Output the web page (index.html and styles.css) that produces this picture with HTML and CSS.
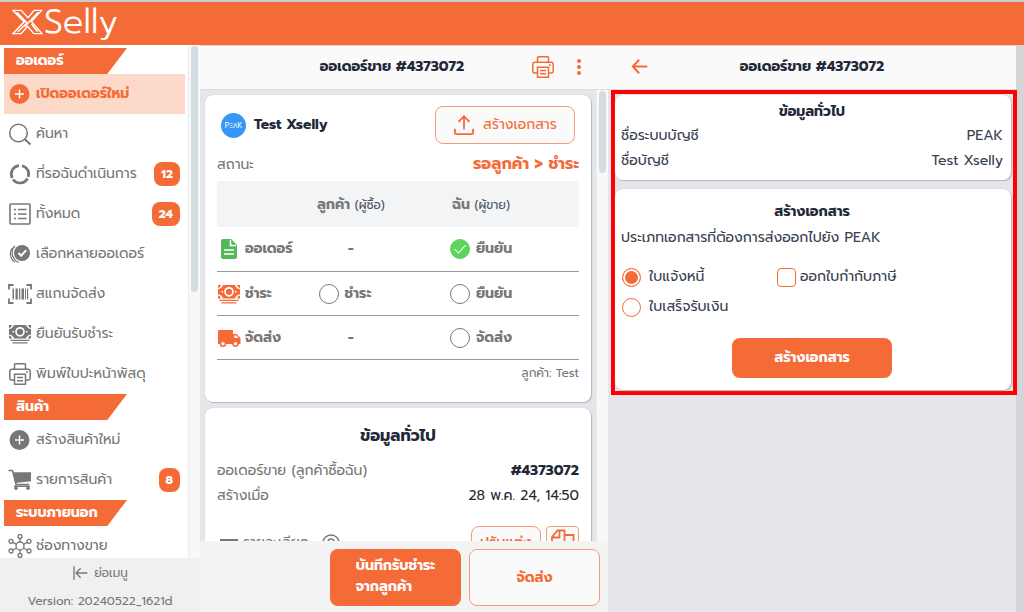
FILE: index.html
```html
<!DOCTYPE html>
<html lang="th">
<head>
<meta charset="utf-8">
<meta name="viewport" content="width=device-width, initial-scale=1">
<title>XSelly</title>
<link rel="stylesheet" href="styles.css">
</head>
<body>
<svg class="sprite" aria-hidden="true">
  <symbol id="plus" viewBox="0 0 24 24"><circle cx="11.500" cy="12" r="10" fill="currentColor"/><path d="M7 12h9M11.500 7.500v9" stroke="#fff" stroke-width="1.400"/></symbol>
  <symbol id="search" viewBox="0 0 24 24"><g fill="none" stroke="currentColor" stroke-width="1.500"><circle cx="10.500" cy="11" r="8.800"/><path d="M16.800 17.300L22.500 22.500" stroke-width="2"/></g></symbol>
  <symbol id="ring" viewBox="0 0 24 24"><g fill="none" stroke="currentColor" stroke-width="2.700"><path d="M14 3.700A8.600 8.600 0 0 1 20.200 15"/><path d="M19.500 16.500A8.600 8.600 0 0 1 5 17.500"/><path d="M4.200 16A8.600 8.600 0 0 1 11 3.600"/></g></symbol>
  <symbol id="list" viewBox="0 0 24 24"><g fill="none" stroke="currentColor" stroke-width="1.600"><rect x="2" y="2" width="20" height="20" rx="1"/><path d="M6 7.500h2M10 7.500h8.500M6 12h2M10 12h8.500M6 16.500h2M10 16.500h8.500"/></g></symbol>
  <symbol id="multi" viewBox="0 0 24 24"><circle cx="14" cy="11" r="8" fill="currentColor"/><path d="M10.500 11l2.700 2.700 5-5.500" fill="none" stroke="#fff" stroke-width="2"/><path d="M7 4C2.500 7.500 3 16.500 10.500 20.500M4.500 6C1 9.500 2 17.500 7 20" fill="none" stroke="currentColor" stroke-width="1.200"/></symbol>
  <symbol id="barcode" viewBox="0 0 24 24"><path d="M5.500 3H1v4.500M18.500 3H23v4.500M5.500 21H1v-4.500M18.500 21H23v-4.500" fill="none" stroke="currentColor" stroke-width="1.800"/><path d="M4.500 6.500H6v11H4.500zM7.500 6.500h2.300v11H7.500zM11 6.500h1.300v11H11zM13.500 6.500h2.500v11h-2.500zM17 6.500h1v11h-1zM19 6.500h1.200v11H19z" fill="currentColor"/></symbol>
  <symbol id="money" viewBox="0 0 24 24"><path d="M1 3h3a3.500 3.500 0 0 1-3 3zM6 3h12c.5 2 2.500 4 5 4v5.500c-2.500 0-4.500 2-5 4H6c-.5-2-2.500-4-5-4V7c2.500 0 4.500-2 5-4zM20 3h3v3a3.500 3.500 0 0 1-3-3zM1 13.500a3.500 3.500 0 0 1 3 3H1zM23 13.500a3.500 3.500 0 0 0-3 3h3zM2.500 17.800h19v1.300h-19zM4.500 20.200h15v1.300h-15z" fill="currentColor"/><circle cx="12" cy="9.800" r="4" fill="none" stroke="#fff" stroke-width="1.700"/><path d="M4.500 9.800h1.500M18 9.800h1.500" stroke="#fff" stroke-width="1.500"/></symbol>
  <symbol id="printer" viewBox="0 0 24 24"><g fill="none" stroke="currentColor" stroke-width="1.500"><path d="M6.500 7V2.500q0-.8.800-.8h9.400q.8 0 .8.800V7M6.500 18H3.500Q1.800 18 1.800 16.300V9.500Q1.800 7.300 4 7.300h16q2.200 0 2.200 2.200v6.800q0 1.700-1.700 1.700h-3"/><path d="M6.500 12.300h11v10h-11zM9 15.500h6M9 18.700h6"/></g><circle cx="19" cy="10" r=".9" fill="currentColor"/></symbol>
  <symbol id="cart" viewBox="0 0 24 24"><path d="M.5 2.500h4l3.500 14h13" fill="none" stroke="currentColor" stroke-width="1.500"/><path d="M5 4.300h18v9L7.300 15zM6 17.500h16V19H6z" fill="currentColor"/><circle cx="8" cy="20.300" r="1.700" fill="currentColor"/><circle cx="20" cy="20.300" r="1.700" fill="currentColor"/></symbol>
  <symbol id="hub" viewBox="0 0 24 24"><g fill="none" stroke="currentColor" stroke-width="1.300"><circle cx="12" cy="12" r="4"/><circle cx="12" cy="2.500" r="2"/><circle cx="12" cy="21.500" r="2"/><circle cx="3" cy="7.300" r="2"/><circle cx="21" cy="7.300" r="2"/><circle cx="3" cy="17" r="2"/><circle cx="21" cy="17" r="2"/><path d="M12 4.500V8M12 16v3.500M4.800 8.300l3.800 2M19.200 8.300l-3.800 2M4.800 16l3.800-2M19.200 16l-3.800-2"/></g></symbol>
  <symbol id="collapse" viewBox="0 0 24 24"><path d="M3 2v20M23 12H6M13 5L6 12l7 7" fill="none" stroke="currentColor" stroke-width="2"/></symbol>
  <symbol id="back" viewBox="0 0 24 24"><path d="M23 12H3M11.500 2.500L2.500 12l9 9.500" fill="none" stroke="currentColor" stroke-width="2.800"/></symbol>
  <symbol id="upload" viewBox="0 0 24 24"><path d="M2 16v4.500q0 1.500 1.500 1.500h17q1.500 0 1.500-1.500V16M12 17V3M6 8.500L12 2.500l6 6" fill="none" stroke="currentColor" stroke-width="2"/></symbol>
  <symbol id="doc" viewBox="0 0 24 24"><path d="M6 2h8L20 8v12q0 2-2 2H6q-2 0-2-2V4q0-2 2-2z" fill="currentColor"/><path d="M13.500 3v5.500H19M7 13h10M7 17h10" fill="none" stroke="#fff" stroke-width="1.500"/></symbol>
  <symbol id="truck" viewBox="0 0 24 24"><path d="M2 4h13q1 0 1 1v3h3.500L23.500 12v6H1V5q0-1 1-1z" fill="currentColor"/><path d="M17.300 9.500h2L21.500 12h-4.200z" fill="#fff"/><circle cx="6" cy="17.700" r="2.500" fill="#fff" stroke="currentColor" stroke-width="1.500"/><circle cx="18.500" cy="17.700" r="2.500" fill="#fff" stroke="currentColor" stroke-width="1.500"/></symbol>
  <symbol id="copy" viewBox="0 0 24 24"><path d="M6.500 3.500H13.500V15H1V10zM8.500 4v6.500H1.500M13.500 8h9v13H10v-6" fill="none" stroke="currentColor" stroke-width="1.800"/></symbol>
</svg>

<header class="topbar">
  <a class="brand" href="#" aria-label="XSelly">
    <svg class="brand-x" viewBox="0 0 32 26"><path d="M1 1h8.500l7 7.500L23 1h7.500L20 12.500 31 25h-8.500L16 17.500 9.500 25H1L12.500 13zM5 3l10.500 11L6 23M27 3L13 18M20 15l6.500 8" fill="none" stroke="currentColor" stroke-width="1.500"/></svg>
    <span>Selly</span>
  </a>
</header>

<div class="workspace">
  <aside class="sidebar">
    <div class="scroll-area">
      <nav class="menu">
        <h2 class="menu-title">ออเดอร์</h2>
        <a class="menu-item active" href="#"><svg class="icon"><use href="#plus"/></svg><span>เปิดออเดอร์ใหม่</span></a>
        <a class="menu-item" href="#"><svg class="icon"><use href="#search"/></svg><span>ค้นหา</span></a>
        <a class="menu-item" href="#"><svg class="icon"><use href="#ring"/></svg><span>ที่รอฉันดำเนินการ</span><b class="badge">12</b></a>
        <a class="menu-item" href="#"><svg class="icon"><use href="#list"/></svg><span>ทั้งหมด</span><b class="badge">24</b></a>
        <a class="menu-item" href="#"><svg class="icon"><use href="#multi"/></svg><span>เลือกหลายออเดอร์</span></a>
        <a class="menu-item" href="#"><svg class="icon"><use href="#barcode"/></svg><span>สแกนจัดส่ง</span></a>
        <a class="menu-item" href="#"><svg class="icon"><use href="#money"/></svg><span>ยืนยันรับชำระ</span></a>
        <a class="menu-item" href="#"><svg class="icon"><use href="#printer"/></svg><span>พิมพ์ใบปะหน้าพัสดุ</span></a>
        <h2 class="menu-title">สินค้า</h2>
        <a class="menu-item" href="#"><svg class="icon"><use href="#plus"/></svg><span>สร้างสินค้าใหม่</span></a>
        <a class="menu-item" href="#"><svg class="icon"><use href="#cart"/></svg><span>รายการสินค้า</span><b class="badge">8</b></a>
        <h2 class="menu-title">ระบบภายนอก</h2>
        <a class="menu-item" href="#"><svg class="icon"><use href="#hub"/></svg><span>ช่องทางขาย</span></a>
      </nav>
      <div class="track"><div class="thumb thumb-long"></div></div>
    </div>
    <footer class="sidebar-foot">
      <button class="collapse" type="button"><svg class="icon-small"><use href="#collapse"/></svg>ย่อเมนู</button>
      <p>Version: 20240522_1621d</p>
    </footer>
  </aside>

  <main class="pane">
    <header class="pane-head">
      <h1>ออเดอร์ขาย #4373072</h1>
      <div class="head-actions">
        <button type="button" aria-label="พิมพ์"><svg class="icon"><use href="#printer"/></svg></button>
        <button class="dots" type="button" aria-label="เพิ่มเติม"><i></i><i></i><i></i></button>
      </div>
    </header>
    <div class="scroll-area">
      <div class="cards">
        <section class="card order-card">
          <div class="customer">
            <span class="avatar">PΞΛK</span>
            <strong>Test Xselly</strong>
            <button class="btn-outline export" type="button"><svg class="icon-medium"><use href="#upload"/></svg>สร้างเอกสาร</button>
          </div>
          <div class="row status"><span>สถานะ</span><strong>รอลูกค้า &gt; ชำระ</strong></div>
          <table class="steps">
            <thead><tr><th class="col-step"></th><th class="col-buyer">ลูกค้า <small>(ผู้ซื้อ)</small></th><th class="col-seller">ฉัน <small>(ผู้ขาย)</small></th></tr></thead>
            <tbody>
              <tr><th><span class="step"><svg class="icon green"><use href="#doc"/></svg>ออเดอร์</span></th><td>-</td><td class="col-seller"><label class="check"><input type="checkbox" checked>ยืนยัน</label></td></tr>
              <tr><th><span class="step"><svg class="icon orange"><use href="#money"/></svg>ชำระ</span></th><td><label class="check buyer-check"><input type="checkbox">ชำระ</label></td><td class="col-seller"><label class="check"><input type="checkbox">ยืนยัน</label></td></tr>
              <tr><th><span class="step"><svg class="icon orange"><use href="#truck"/></svg>จัดส่ง</span></th><td>-</td><td class="col-seller"><label class="check"><input type="checkbox">จัดส่ง</label></td></tr>
            </tbody>
          </table>
          <p class="customer-note">ลูกค้า: Test</p>
        </section>
        <section class="card info-card">
          <h2>ข้อมูลทั่วไป</h2>
          <div class="row"><span>ออเดอร์ขาย (ลูกค้าซื้อฉัน)</span><strong>#4373072</strong></div>
          <div class="row"><span>สร้างเมื่อ</span><span class="dark">28 พ.ค. 24, 14:50</span></div>
          <div class="detail">
            <span class="lines"></span><span class="detail-label">รายละเอียด</span>
            <svg class="target" viewBox="0 0 18 18"><g fill="none" stroke="currentColor" stroke-width="1.500"><circle cx="9" cy="9" r="8"/><circle cx="9" cy="8" r="3"/></g></svg>
            <button class="btn-outline adjust" type="button">ปรับแต่ง</button>
            <button class="btn-outline copy" type="button" aria-label="คัดลอก"><svg class="icon"><use href="#copy"/></svg></button>
          </div>
        </section>
      </div>
      <div class="track"><div class="thumb"></div></div>
    </div>
    <footer class="pane-foot">
      <button class="btn-fill" type="button"><span>บันทึกรับชำระ<br>จากลูกค้า</span></button>
      <button class="btn-outline" type="button">จัดส่ง</button>
    </footer>
  </main>

  <section class="pane side">
    <header class="pane-head">
      <button class="back" type="button" aria-label="กลับ"><svg><use href="#back"/></svg></button>
      <h1>ออเดอร์ขาย #4373072</h1>
    </header>
    <div class="highlighted">
      <section class="card account">
        <h2>ข้อมูลทั่วไป</h2>
        <div class="row"><span>ชื่อระบบบัญชี</span><span>PEAK</span></div>
        <div class="row"><span>ชื่อบัญชี</span><span>Test Xselly</span></div>
      </section>
      <form class="card create">
        <h2>สร้างเอกสาร</h2>
        <p>ประเภทเอกสารที่ต้องการส่งออกไปยัง PEAK</p>
        <div class="choices">
          <label><input type="radio" name="doc" checked>ใบแจ้งหนี้</label>
          <label class="tax"><input type="checkbox">ออกใบกำกับภาษี</label>
          <label><input type="radio" name="doc">ใบเสร็จรับเงิน</label>
        </div>
        <button class="btn-fill submit" type="button">สร้างเอกสาร</button>
      </form>
    </div>
  </section>
</div>
</body>
</html>
```

FILE: styles.css
```css
* { box-sizing: border-box; }
body {
  margin: 0;
  height: 100vh;
  display: flex;
  flex-direction: column;
  overflow: hidden;
  background: #e5e5ea;
  color: #1f2937;
  font: 14px/24px Prompt, "Noto Sans Thai", "Noto Sans", sans-serif;
}
h1, h2, p { margin: 0; }
h1, h2 { font-size: 14px; line-height: 24px; font-weight: 700; }
button { font: inherit; color: inherit; border: 0; padding: 0; background: none; cursor: pointer; }
a { color: inherit; text-decoration: none; }
input { appearance: none; margin: 0; flex: none; background: #fff; }
.sprite { position: absolute; width: 0; height: 0; }
.icon { width: 24px; height: 24px; flex: none; }
.icon-medium { width: 22px; height: 22px; }
.icon-small { width: 16px; height: 16px; }
.orange { color: #f56b38; }
.green { color: #56b65a; }

.topbar { flex: none; height: 45px; border-top: 2px solid #cbcbcb; background: #f56b38; padding: 0 12px; }
.brand { display: flex; align-items: center; gap: 1px; height: 40px; color: #fff; font-size: 34px; font-weight: 300; line-height: 40px; }
.brand-x { width: 31px; height: 26px; }

.workspace { flex: 1; min-height: 0; display: grid; grid-template-columns: 200px minmax(0, 1fr) minmax(0, 1fr); border-right: 8px solid #d3d3d8; }
.sidebar, .pane { min-height: 0; min-width: 0; display: flex; flex-direction: column; }
.scroll-area { flex: 1; min-height: 0; display: flex; overflow: hidden; }
.track { flex: none; width: 12px; background: #f8f8f8; padding: 1px 2px; border-left: 1px solid #ececf0; }
.thumb { height: 82px; border-radius: 4px; background: #d5dce0; }
.thumb-long { height: 246px; }

.sidebar { background: #fff; color: #777; }
.menu { flex: 1; padding: 3px 3px 0 4px; }
.menu-title { width: 123px; height: 26px; padding-left: 12px; line-height: 26px; color: #fff; background: #f56b38; clip-path: polygon(0 0, 100% 0, 84% 100%, 0 100%); }
.menu-item { display: flex; align-items: center; gap: 4px; height: 40px; padding: 0 5px 0 4px; line-height: 26px; white-space: nowrap; }
.menu-item.active { background: #fcd9c8; color: #f56b38; font-weight: 700; }
.badge { margin-left: auto; padding: 0 7px; border-radius: 8px; background: #f56b38; color: #fff; font-size: 12px; line-height: 24px; }
.sidebar-foot { flex: none; height: 54px; background: #f0f0f0; text-align: center; font-size: 12px; }
.collapse { display: inline-flex; align-items: center; gap: 6px; height: 30px; }

.pane-head { flex: none; height: 45px; display: flex; align-items: center; justify-content: center; background: #fafafa; border-top: 1px solid #fbc9b5; border-bottom: 1px solid #dcdce4; padding: 0 27px 2px 53px; }
.pane-head h1 { flex: 1; text-align: center; }
.head-actions { display: flex; align-items: center; gap: 22px; color: #f56b38; }
.head-actions button { display: flex; }
.pane .dots { flex-direction: column; gap: 2px; }
.dots i { width: 4px; height: 4px; border-radius: 50%; background: #f56b38; }
.cards { flex: 1; min-width: 0; padding: 5px 5px 0; display: flex; flex-direction: column; gap: 6px; }
.card { flex: none; background: #fff; border-radius: 8px; box-shadow: 1px 1px 1px #b4b5c0, 0 0 1px #b4b5c0; }
.card h2 { text-align: center; }
.row { display: flex; justify-content: space-between; line-height: 25px; }
.order-card { padding: 11px 12px 16px; color: #777; }
.customer { display: flex; align-items: center; gap: 8px; padding: 0 4px; color: #1f2937; }
.avatar { width: 25px; height: 25px; border-radius: 50%; background: #3897f6; color: #fff; font-size: 7px; line-height: 25px; text-align: center; }
.btn-outline { border: 1px solid #f79b79; border-radius: 8px; background: #fafafa; color: #f56b38; }
.btn-fill { border-radius: 8px; background: #f56b38; color: #fff; font-weight: 700; }
.export { margin-left: auto; width: 140px; height: 38px; display: flex; align-items: center; justify-content: center; gap: 8px; }
.status { padding: 8px 0 4px; }
.status strong { color: #f56b38; font-size: 16px; }
.steps { width: 100%; table-layout: fixed; border-collapse: collapse; }
.steps thead { background: #f3f4f6; }
.steps thead th { height: 46px; }
.steps small { font-size: 12px; font-weight: 400; color: #4b5563; }
.steps th, .steps td { height: 44px; padding: 1px 0 0; text-align: center; font-weight: 700; }
.steps tbody tr { border-bottom: 1px solid #999; }
.col-step { width: 19%; }
.col-buyer { width: 36%; }
.steps .col-seller { padding-right: 33px; }
.step, .check { display: inline-flex; align-items: center; gap: 4px; white-space: nowrap; vertical-align: middle; }
.step { display: flex; }
.check { gap: 6px; }
.buyer-check { padding-right: 12px; }
.check input { width: 20px; height: 20px; border: 1px solid #777; border-radius: 50%; }
.check input:checked { border-color: #5fd45b; background: #5fd45b; display: grid; place-items: center; }
.check input:checked::before { content: ""; width: 5px; height: 10px; margin-bottom: 3px; border: solid #fff; border-width: 0 1px 1px 0; transform: rotate(42deg); }
.customer-note { text-align: right; font-size: 12px; line-height: 26px; }
.info-card { padding: 16px 12px 24px; color: #777; }
.info-card h2 { color: #1f2937; font-size: 16px; margin-bottom: 10px; }
.info-card strong, .dark { color: #1f2937; }
.detail { display: flex; align-items: center; gap: 5px; padding-top: 18px; }
.lines { width: 18px; height: 8px; margin-left: 3px; border: solid #777; border-width: 2px 0; }
.target { width: 18px; height: 18px; margin-left: 8px; }
.adjust { margin-left: auto; width: 70px; height: 34px; font-weight: 500; }
.copy { width: 33px; height: 34px; border-radius: 4px; }
.pane-foot { flex: none; display: flex; justify-content: flex-end; gap: 8px; height: 71px; padding: 8px 8px 6px; background: #f3f3f3; }
.pane-foot button { width: 131px; font-weight: 700; line-height: 21px; }
.pane-foot span { display: inline-block; padding-bottom: 3px; text-align: left; }

.side .pane-head { padding: 0 40px 2px 23px; }
.back { display: flex; color: #f56b38; }
.back svg { width: 17px; height: 17px; }
.highlighted { margin: 0 -1px 0 3px; border: 4px solid #f00; display: flex; flex-direction: column; gap: 9px; padding: 1px 2px 1px 0; position: relative; }
.highlighted .card { padding: 6px 8px 8px 6px; color: #374151; }
.highlighted h2 { color: #1f2937; line-height: 22px; }
.highlighted .account { padding-bottom: 7px; }
.highlighted .create { padding-top: 12px; padding-bottom: 12px; }
.create p { line-height: 30px; }
.choices { display: grid; grid-template-columns: 155px 1fr; padding: 9px 0 16px 1px; }
.choices label { display: flex; align-items: center; gap: 8px; height: 30px; }
.choices .tax { gap: 4px; }
.choices input { width: 19px; height: 19px; border: 1px solid #f56b38; border-radius: 50%; }
.choices input[type="checkbox"] { border-radius: 4px; }
.choices input[type="radio"]:checked { background: #f56b38; box-shadow: inset 0 0 0 2px #fff; }
.submit { display: block; width: 160px; height: 40px; margin: 0 auto; }
```
